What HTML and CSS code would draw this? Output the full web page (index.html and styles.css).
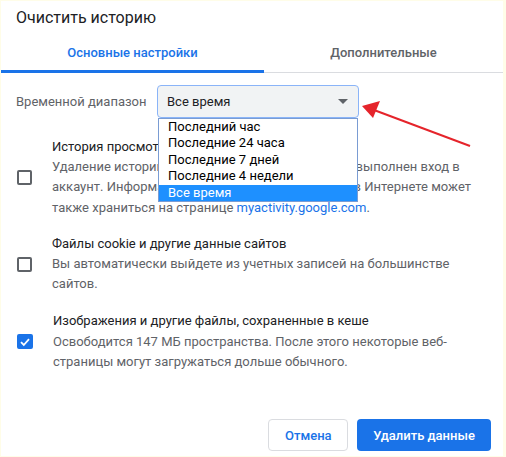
FILE: index.html
```html
<!DOCTYPE html>
<html lang="ru">
<head>
  <meta charset="UTF-8">
  <title>Очистить историю</title>
  <link rel="stylesheet" href="styles.css">
</head>
<body>
  <div class="dialog">
    <h1 class="dialog-title">Очистить историю</h1>

    <div class="tabs">
      <div class="tab tab-active">Основные настройки</div>
      <div class="tab">Дополнительные</div>
    </div>

    <div class="range-row">
      <span class="range-label">Временной диапазон</span>
      <div class="select-wrap">
        <div class="select">
          <span>Все время</span>
          <span class="select-arrow"></span>
        </div>
        <ul class="select-list">
          <li>Последний час</li>
          <li>Последние 24 часа</li>
          <li>Последние 7 дней</li>
          <li>Последние 4 недели</li>
          <li class="selected">Все время</li>
        </ul>
      </div>
    </div>

    <div class="option">
      <span class="checkbox"></span>
      <div class="option-text">
        <div class="option-title">История просмотров</div>
        <div class="option-desc">Удаление истории со всех устройств, на которых выполнен вход в аккаунт. Информация о других ваших действиях в Интернете может также храниться на странице <a href="#">myactivity.google.com</a>.</div>
      </div>
    </div>

    <div class="option">
      <span class="checkbox"></span>
      <div class="option-text">
        <div class="option-title">Файлы cookie и другие данные сайтов</div>
        <div class="option-desc">Вы автоматически выйдете из учетных записей на большинстве сайтов.</div>
      </div>
    </div>

    <div class="option option-last">
      <span class="checkbox checked">
        <svg width="12" height="12" viewBox="0 0 12 12"><path d="M2 6.2 L4.8 9 L10 3.2" fill="none" stroke="#fff" stroke-width="1.8"/></svg>
      </span>
      <div class="option-text">
        <div class="option-title">Изображения и другие файлы, сохраненные в кеше</div>
        <div class="option-desc">Освободится 147 МБ пространства. После этого некоторые веб-страницы могут загружаться дольше обычного.</div>
      </div>
    </div>

    <div class="actions">
      <button class="btn btn-cancel">Отмена</button>
      <button class="btn btn-primary">Удалить данные</button>
    </div>

    <svg class="pointer" width="506" height="457" viewBox="0 0 506 457">
      <line x1="374" y1="110" x2="470" y2="146" stroke="#e5242b" stroke-width="2"/>
      <polygon points="362,106 380,101 373,118" fill="#e5242b"/>
    </svg>
  </div>
</body>
</html>
```

FILE: styles.css
```css
* {
  box-sizing: border-box;
}

body {
  margin: 0;
  background: #fffde8;
  font-family: Roboto, 'Liberation Sans', Arial, sans-serif;
  color: #202124;
}

.dialog {
  position: relative;
  margin: 1px 3px 0 1px;
  height: 455px;
  background: #fff;
  display: flex;
  flex-direction: column;
}

.dialog-title {
  margin: 0;
  padding: 7px 15px 0;
  height: 34px;
  font-size: 16px;
  font-weight: 400;
  line-height: 20px;
  color: #202124;
}

.tabs {
  display: flex;
  border-bottom: 1px solid #dadce0;
  height: 38px;
}

.tab {
  flex: 1;
  text-align: center;
  font-size: 13px;
  font-weight: 500;
  line-height: 36px;
  color: #5f6368;
}

.tab-active {
  flex: 0 0 263px;
  color: #1a73e8;
  border-bottom: 3px solid #1a73e8;
  margin-bottom: -1px;
}

.range-row {
  display: flex;
  align-items: center;
  margin-top: 12px;
  padding-left: 15px;
  height: 33px;
}

.range-label {
  width: 141px;
  font-size: 13px;
  color: #5f6368;
}

.select-wrap {
  position: relative;
}

.select {
  width: 202px;
  height: 33px;
  display: flex;
  align-items: center;
  justify-content: space-between;
  padding: 0 9px 0 9px;
  background: #f1f3f4;
  border: 1px solid #8ab4f8;
  border-radius: 4px;
  font-size: 13px;
  color: #202124;
}

.select-arrow {
  width: 0;
  height: 0;
  border-left: 5px solid transparent;
  border-right: 5px solid transparent;
  border-top: 5px solid #5f6368;
  margin-right: 1px;
}

.select-list {
  position: absolute;
  top: 33px;
  left: 1px;
  width: 200px;
  margin: 0;
  padding: 0;
  list-style: none;
  background: #fff;
  border: 1px solid #7a9cd3;
  z-index: 2;
}

.select-list li {
  font-size: 13px;
  line-height: 16.4px;
  padding-left: 9px;
  color: #000;
}

.select-list li.selected {
  background: #1e90ff;
  color: #fff;
}

.option {
  display: flex;
  align-items: center;
  padding: 0 30px 0 16px;
  margin-top: 16px;
}

.range-row + .option {
  margin-top: 19px;
}

.option-last {
  margin-top: 17px;
}

.checkbox {
  flex: 0 0 15px;
  height: 15px;
  border: 2px solid #5f6368;
  border-radius: 2px;
  margin-right: 20px;
  display: flex;
  align-items: center;
  justify-content: center;
}

.checkbox.checked {
  background: #1a73e8;
  border-color: #1a73e8;
}

.option-text {
  font-size: 13px;
  line-height: 20.2px;
}

.option-title {
  color: #202124;
}

.option-desc {
  color: #5f6368;
}

.option-desc a {
  color: #1a73e8;
  text-decoration: none;
}

.actions {
  margin-top: auto;
  display: flex;
  justify-content: flex-end;
  gap: 9px;
  padding: 0 12px 5px 0;
}

.btn {
  height: 32px;
  padding: 0 16px;
  border-radius: 4px;
  font-family: inherit;
  font-size: 13px;
  font-weight: 500;
  cursor: pointer;
}

.btn-cancel {
  width: 80px;
  background: #fff;
  border: 1px solid #dadce0;
  color: #1a73e8;
}

.btn-primary {
  width: 134px;
  background: #1a73e8;
  border: none;
  color: #fff;
}

.pointer {
  position: absolute;
  top: -1px;
  left: -1px;
  pointer-events: none;
  z-index: 3;
}
```
